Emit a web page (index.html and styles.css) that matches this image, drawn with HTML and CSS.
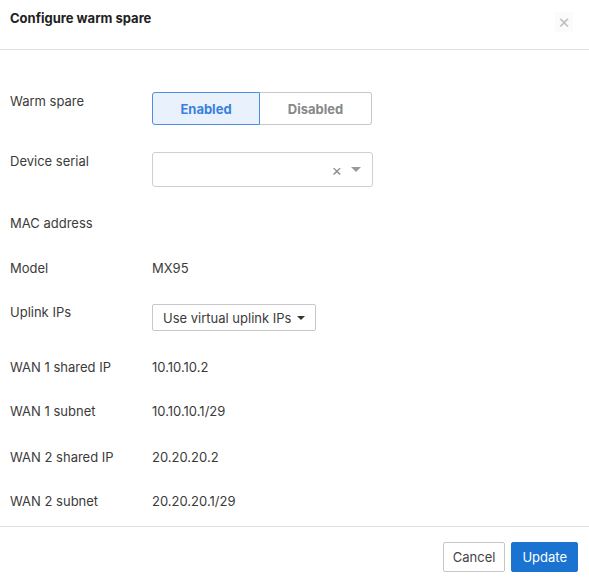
FILE: index.html
```html
<!DOCTYPE html>
<html>
  <head>
    <title>Configure warm spare</title>
    <link rel="stylesheet" href="styles.css">
  </head>
  <body>
    <div class="modal">
      <div class="modal-header">
        <div class="modal-title">Configure warm spare</div>
        <button class="close-btn" type="button">&times;</button>
      </div>

      <div class="modal-body">
        <div class="row row-warm">
          <div class="label">Warm spare</div>
          <div class="toggle">
            <button class="toggle-item active" type="button">Enabled</button>
            <button class="toggle-item" type="button">Disabled</button>
          </div>
        </div>

        <div class="row row-serial">
          <div class="label">Device serial</div>
          <div class="select">
            <span class="select-clear">&times;</span>
            <span class="select-caret"></span>
          </div>
        </div>

        <div class="row">
          <div class="label">MAC address</div>
          <div class="value"></div>
        </div>

        <div class="row row-model">
          <div class="label">Model</div>
          <div class="value">MX95</div>
        </div>

        <div class="row row-uplink">
          <div class="label">Uplink IPs</div>
          <button class="dropdown" type="button">Use virtual uplink IPs <span class="caret"></span></button>
        </div>

        <div class="row">
          <div class="label">WAN 1 shared IP</div>
          <div class="value">10.10.10.2</div>
        </div>

        <div class="row">
          <div class="label">WAN 1 subnet</div>
          <div class="value">10.10.10.1/29</div>
        </div>

        <div class="row row-wan2">
          <div class="label">WAN 2 shared IP</div>
          <div class="value">20.20.20.2</div>
        </div>

        <div class="row">
          <div class="label">WAN 2 subnet</div>
          <div class="value">20.20.20.1/29</div>
        </div>
      </div>

      <div class="modal-footer">
        <button class="btn" type="button">Cancel</button>
        <button class="btn btn-primary" type="button">Update</button>
      </div>
    </div>
  </body>
</html>
```

FILE: styles.css
```css
html,
body {
  margin: 0;
  height: 100%;
  background: #fff;
}

body {
  font-family: Inter, "Noto Sans", sans-serif;
  font-size: 13px;
  color: #3b3b3b;
}

button {
  font-family: inherit;
  cursor: pointer;
}

.modal {
  width: 589px;
  display: flex;
  flex-direction: column;
}

.modal-header {
  height: 50px;
  box-sizing: border-box;
  border-bottom: 1px solid #e3e3e3;
  display: flex;
  justify-content: space-between;
  align-items: flex-start;
  padding: 10px 16px 0 10px;
}

.modal-title {
  font-size: 13px;
  font-weight: 700;
  color: #222;
  line-height: 16px;
}

.close-btn {
  margin-top: 2px;
  width: 18px;
  height: 20px;
  padding: 0;
  border: none;
  background: #fbfbfb;
  color: #c0c0c0;
  font-size: 19px;
  line-height: 20px;
}

.modal-body {
  padding: 42px 10px 17px 10px;
  display: flex;
  flex-direction: column;
  gap: 28px;
}

.row {
  display: flex;
  align-items: flex-start;
  line-height: 16px;
}

.row-warm {
  margin-bottom: -1px;
}

.row-model {
  margin-top: 1px;
}

.row-wan2 {
  margin-top: 2px;
}

.label {
  width: 142px;
  flex-shrink: 0;
}

.row-warm .label,
.row-serial .label {
  padding-top: 1px;
}

.value {
  min-height: 16px;
}

.toggle {
  display: flex;
}

.toggle-item {
  height: 33px;
  box-sizing: border-box;
  border: 1px solid #c8c8c8;
  background: #fff;
  color: #888;
  font-size: 13px;
  font-weight: 700;
  padding: 0;
  width: 112px;
}

.toggle-item.active {
  width: 108px;
  background: #e9f1fc;
  border-color: #4d8ee0;
  color: #3a80dd;
  border-radius: 3px 0 0 3px;
}

.toggle-item + .toggle-item {
  border-left: none;
  border-radius: 0 3px 3px 0;
}

.select {
  width: 221px;
  height: 35px;
  box-sizing: border-box;
  border: 1px solid #cfcfcf;
  border-radius: 3px;
  display: flex;
  align-items: center;
  justify-content: flex-end;
  gap: 9px;
  padding-right: 11px;
}

.select-clear {
  color: #8a8a8a;
  font-size: 16px;
  line-height: 16px;
}

.select-caret {
  width: 0;
  height: 0;
  border-left: 5px solid transparent;
  border-right: 5px solid transparent;
  border-top: 5px solid #999;
}

.dropdown {
  height: 27px;
  box-sizing: border-box;
  padding: 0 10px;
  border: 1px solid #c8c8c8;
  border-radius: 2px;
  background: #fff;
  color: #3b3b3b;
  font-size: 13px;
  display: flex;
  align-items: center;
  gap: 6px;
}

.caret {
  width: 0;
  height: 0;
  border-left: 4px solid transparent;
  border-right: 4px solid transparent;
  border-top: 4px solid #333;
}

.modal-footer {
  border-top: 1px solid #e3e3e3;
  display: flex;
  justify-content: flex-end;
  gap: 6px;
  padding: 15px 11px 0 0;
}

.btn {
  height: 30px;
  box-sizing: border-box;
  padding: 0 9px;
  border: 1px solid #c6c6c6;
  border-radius: 2px;
  background: #fff;
  color: #444;
  font-size: 13px;
}

.btn-primary {
  padding: 0 10px;
  background: #1a73d1;
  border-color: #1a73d1;
  color: #fff;
}
```
